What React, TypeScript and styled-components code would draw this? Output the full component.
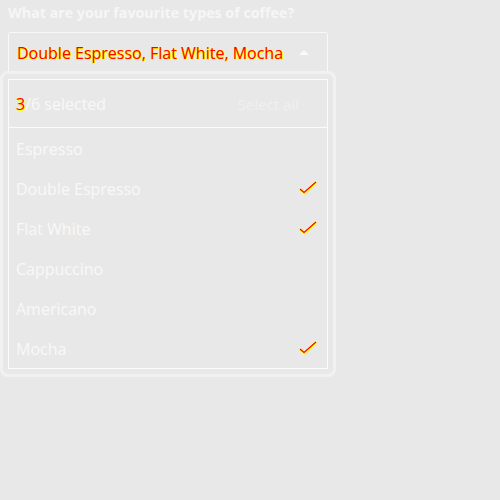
import React from "react";
import styled, { createGlobalStyle } from "styled-components";

const Global = createGlobalStyle`
  html, body { margin: 0; padding: 0; background: #e8e8e8; }
  body { font-family: "Open Sans", "Noto Sans", sans-serif; }
`;

const Page = styled.div`
  width: 500px;
  height: 500px;
  box-sizing: border-box;
  padding: 4px 0 0 0;
  background: #e8e8e8;
`;

const Label = styled.div`
  margin-left: 8px;
  font-size: 14.25px;
  font-weight: 700;
  color: #f6f6f6;
  line-height: 18px;
`;

const Field = styled.div`
  margin: 10px 0 0 8px;
  width: 320px;
  height: 41px;
  box-sizing: border-box;
  border: 1px solid #f8f8f8;
  border-radius: 2px;
  display: flex;
  align-items: center;
  padding: 0 8px 0 8px;
`;

const Value = styled.span`
  flex: 1;
  font-size: 16px;
  line-height: 22px;
  white-space: nowrap;
  color: #ff0000;
  text-shadow: 1px 1px 0 #ffff00, 1px 0 0 #ffff00, 0 1px 0 #ffff00;
`;

const Caret = styled.div`
  width: 0;
  height: 0;
  border-left: 5px solid transparent;
  border-right: 5px solid transparent;
  border-bottom: 5px solid #fafafa;
  margin-right: 10px;
`;

const Popup = styled.div`
  margin-top: -2px;
  width: 336px;
  box-sizing: border-box;
  border: 3px solid #f1f1f1;
  border-radius: 8px;
  padding: 5px;
  background: #e8e8e8;
`;

const List = styled.div`
  border: 1px solid #fbfbfb;
  width: 320px;
  box-sizing: border-box;
`;

const Header = styled.div`
  height: 48px;
  display: flex;
  align-items: center;
  justify-content: space-between;
  padding: 1px 28px 0 7px;
  box-sizing: border-box;
  border-bottom: 1px solid #fbfbfb;
  font-size: 16px;
  color: #f8f8f8;
`;

const Count = styled.span`
  display: flex;
  align-items: center;
`;

const Num = styled.span`
  color: #ff0000;
  text-shadow: 1px 1px 0 #ffff00, -1px 0 0 #ffff00;
`;

const SelectAll = styled.span`
  font-size: 15px;
  color: #f0f0f0;
`;

const Item = styled.div`
  height: 40px;
  display: flex;
  align-items: center;
  justify-content: space-between;
  padding: 1px 9px 0 7px;
  box-sizing: border-box;
  font-size: 16px;
  color: #f8f8f8;
`;

const Check = () => (
  <svg width="19" height="15" viewBox="0 0 19 15">
    <path d="M1.5 8.5 L5.5 12 L17.5 1.5" fill="none" stroke="#ffff00" strokeWidth="2.4" />
    <path d="M1 8 L5 11.5 L17 1" fill="none" stroke="#ff0000" strokeWidth="1.1" />
  </svg>
);

const items: [string, boolean][] = [
  ["Espresso", false],
  ["Double Espresso", true],
  ["Flat White", true],
  ["Cappuccino", false],
  ["Americano", false],
  ["Mocha", true],
];

export default function App() {
  return (
    <Page>
      <Global />
      <Label>What are your favourite types of coffee?</Label>
      <Field>
        <Value>Double Espresso, Flat White, Mocha</Value>
        <Caret />
      </Field>
      <Popup>
        <List>
          <Header>
            <Count>
              <Num>3</Num>/6 selected
            </Count>
            <SelectAll>Select all</SelectAll>
          </Header>
          {items.map(([name, on]) => (
            <Item key={name}>
              <span>{name}</span>
              {on && <Check />}
            </Item>
          ))}
        </List>
      </Popup>
    </Page>
  );
}
